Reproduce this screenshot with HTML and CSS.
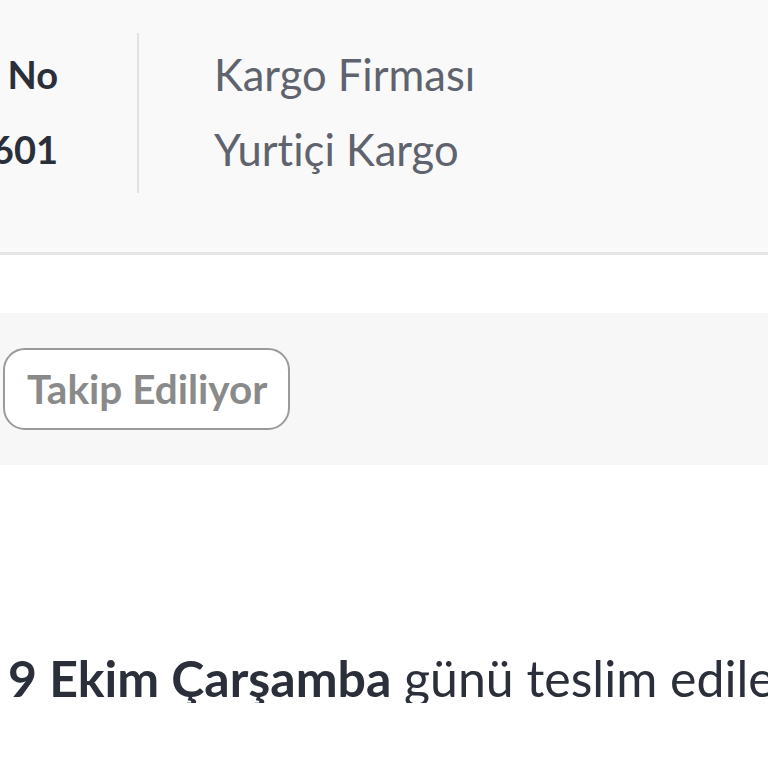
FILE: index.html
```html
<!DOCTYPE html>
<html lang="tr">
<head>
    <meta charset="UTF-8">
    <meta name="viewport" content="width=device-width, initial-scale=1.0">
    <title>Kargo Takip</title>
    <link rel="stylesheet" href="styles.css">
</head>
<body>
    <!-- Shipment summary -->
    <div class="shipment-info">
        <div class="info-row">
            <div class="info-col col-number">
                <div class="info-label">Takip No</div>
                <div class="info-value">7340054601</div>
            </div>
            <div class="divider"></div>
            <div class="info-col col-company">
                <div class="info-label">Kargo Firması</div>
                <div class="info-value">Yurtiçi Kargo</div>
            </div>
        </div>
    </div>

    <!-- Status band -->
    <div class="status-band">
        <span class="status-pill">Takip Ediliyor</span>
    </div>

    <!-- Delivery estimate -->
    <div class="delivery">
        <p class="delivery-text"><strong>9 Ekim Çarşamba</strong> günü teslim edilecektir.</p>
    </div>
</body>
</html>
```

FILE: styles.css
```css
body {
    margin: 0;
    font-family: Lato, "Open Sans", sans-serif;
    font-variant-ligatures: none;
    background-color: #fff;
    color: #2b2f3a;
    overflow: hidden;
}

.shipment-info {
    height: 255px;
    background-color: #f9f9f9;
    border-bottom: 3px solid #e6e6e6;
    padding-top: 33px;
    box-sizing: border-box;
}

.info-row {
    display: flex;
    align-items: flex-start;
    margin-left: -300px;
}

.info-col {
    display: flex;
    flex-direction: column;
    gap: 32px;
    padding-top: 20px;
    line-height: 43px;
}

.col-number {
    width: 358px;
    text-align: right;
    font-size: 38px;
    font-weight: 700;
    color: #2b2f3a;
    white-space: nowrap;
}

.col-company {
    font-size: 43.5px;
    color: #5f636d;
    padding-left: 75px;
    white-space: nowrap;
}

.divider {
    width: 2px;
    height: 160px;
    margin-left: 79px;
    background-color: #e2e2e2;
}

.status-band {
    margin-top: 58px;
    height: 152px;
    background-color: #f7f7f7;
    display: flex;
    align-items: center;
    padding-left: 3px;
}

.status-pill {
    display: inline-block;
    border: 2px solid #9a9a9a;
    border-radius: 22px;
    background-color: #fff;
    color: #8a8a8a;
    font-weight: 700;
    font-size: 40.5px;
    line-height: 78px;
    padding: 0 21px 0 22px;
}

.delivery {
    padding-left: 8px;
}

.delivery-text {
    margin: 189px 0 0;
    font-size: 50px;
    line-height: 49px;
    white-space: nowrap;
}

.delivery-text strong {
    font-weight: 700;
}
```
